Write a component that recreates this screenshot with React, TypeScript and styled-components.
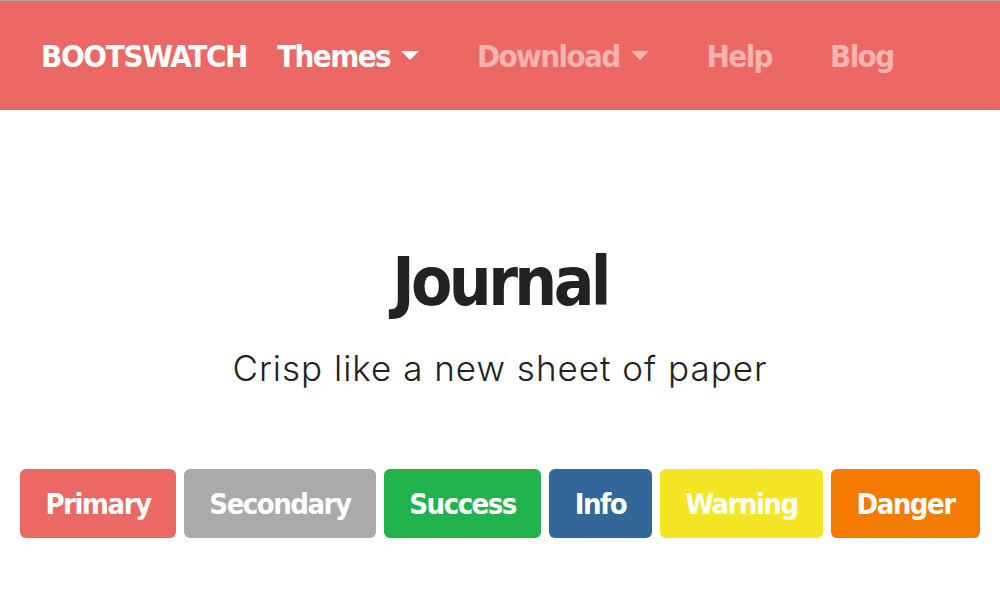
import styled, { createGlobalStyle } from 'styled-components';

const GlobalStyle = createGlobalStyle`
  html, body {
    margin: 0;
    padding: 0;
    background: #fff;
  }
  body {
    border-top: 1px solid #a9a9a9;
    font-family: 'Inter', 'Liberation Sans', sans-serif;
    color: #222;
  }
`;

const condensed = `'DejaVu Sans Condensed', 'DejaVu Sans', sans-serif`;

interface NavItem {
  label: string;
  dropdown?: boolean;
  muted?: boolean;
}

const navItems: NavItem[] = [
  { label: 'Themes', dropdown: true },
  { label: 'Download', dropdown: true, muted: true },
  { label: 'Help', muted: true },
  { label: 'Blog', muted: true },
];

const buttons = [
  { label: 'Primary', color: '#eb6864' },
  { label: 'Secondary', color: '#aaaaaa' },
  { label: 'Success', color: '#22b24c' },
  { label: 'Info', color: '#336699' },
  { label: 'Warning', color: '#f5e625' },
  { label: 'Danger', color: '#f57a00' },
];

const Caret = () => (
  <svg width="18" height="10" viewBox="0 0 18 10">
    <path d="M0 0 L18 0 L9 9 Z" fill="currentColor" />
  </svg>
);

const App = () => {
  return (
    <>
      <GlobalStyle />
      <Navbar>
        <Brand>BOOTSWATCH</Brand>
        <NavList>
          {navItems.map((item) => (
            <NavLink key={item.label} $muted={item.muted}>
              {item.label}
              {item.dropdown && <Caret />}
            </NavLink>
          ))}
        </NavList>
      </Navbar>
      <Hero>
        <Title>Journal</Title>
        <Lead>Crisp like a new sheet of paper</Lead>
      </Hero>
      <ButtonRow>
        {buttons.map((b) => (
          <Button key={b.label} $bg={b.color}>
            {b.label}
          </Button>
        ))}
      </ButtonRow>
    </>
  );
};

const Navbar = styled.nav`
  height: 109px;
  background: #eb6864;
  display: flex;
  align-items: center;
  padding: 0 41px;
  font-family: ${condensed};
  font-stretch: condensed;
  font-weight: 700;
  color: #fff;
`;

const Brand = styled.div`
  font-size: 31px;
  letter-spacing: -1.3px;
  margin-right: 30px;
`;

const NavList = styled.div`
  display: flex;
  align-items: center;
  gap: 58px;
`;

const NavLink = styled.a<{ $muted?: boolean }>`
  display: flex;
  align-items: center;
  gap: 11px;
  font-size: 31px;
  letter-spacing: -1.6px;
  color: ${(p) => (p.$muted ? 'rgba(255,255,255,0.5)' : '#fff')};
`;

const Hero = styled.header`
  display: flex;
  flex-direction: column;
  align-items: center;
  padding-top: 139px;
`;

const Title = styled.h1`
  margin: 0;
  font-family: ${condensed};
  font-stretch: condensed;
  font-weight: 700;
  font-size: 67px;
  letter-spacing: -3.6px;
  line-height: 1;
  color: #222;
`;

const Lead = styled.p`
  margin: 31px 0 0;
  font-family: 'Inter', sans-serif;
  font-weight: 300;
  font-size: 35px;
  letter-spacing: 1px;
  line-height: 1.2;
  color: #222;
`;

const ButtonRow = styled.div`
  display: flex;
  gap: 8px;
  padding: 0 20px;
  margin-top: 80px;
`;

const Button = styled.button<{ $bg: string }>`
  flex: 1 1 auto;
  height: 69px;
  padding: 0 20px;
  border: none;
  border-radius: 6px;
  background: ${(p) => p.$bg};
  color: #fff;
  font-family: ${condensed};
  font-stretch: condensed;
  font-weight: 700;
  font-size: 29px;
  letter-spacing: -1.5px;
`;

export default App;
